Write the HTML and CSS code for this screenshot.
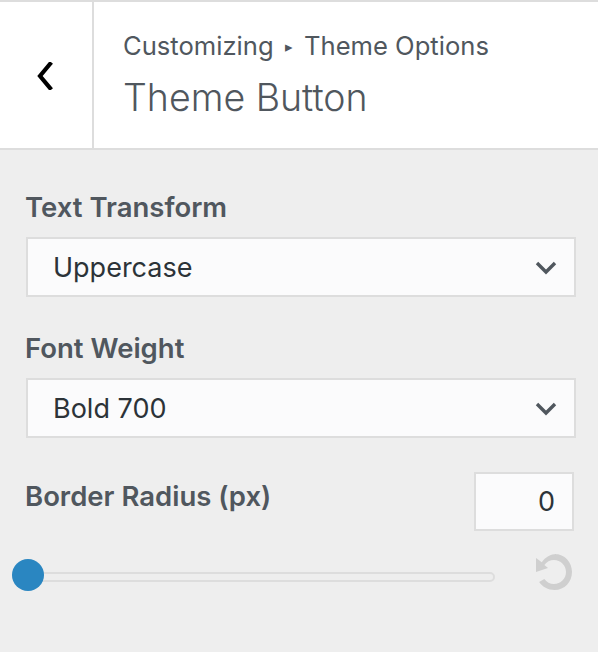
FILE: index.html
```html
<!DOCTYPE html>
<html>
<head>
<meta charset="utf-8">
<link rel="stylesheet" href="styles.css">
</head>
<body>
<header class="header">
  <div class="back">
    <svg width="18" height="28" viewBox="0 0 18 28"><path d="M14 2 L4 14 L14 26" fill="none" stroke="#000" stroke-width="4.2" stroke-linecap="square" stroke-linejoin="miter"/></svg>
  </div>
  <div class="titles">
    <div class="crumb">Customizing <span class="tri">▸</span> Theme Options</div>
    <div class="title">Theme Button</div>
  </div>
</header>
<main class="content">
  <div class="control">
    <div class="label">Text Transform</div>
    <div class="select">
      <span>Uppercase</span>
      <svg class="chev" width="22" height="14" viewBox="0 0 22 14"><path d="M2 2 L11 11 L20 2" fill="none" stroke="#50575e" stroke-width="3.4"/></svg>
    </div>
  </div>
  <div class="control">
    <div class="label">Font Weight</div>
    <div class="select">
      <span>Bold 700</span>
      <svg class="chev" width="22" height="14" viewBox="0 0 22 14"><path d="M2 2 L11 11 L20 2" fill="none" stroke="#50575e" stroke-width="3.4"/></svg>
    </div>
  </div>
  <div class="control range-control">
    <div class="range-head">
      <div class="label">Border Radius (px)</div>
      <div class="number">0</div>
    </div>
    <div class="range-row">
      <div class="track"><div class="thumb"></div></div>
      <svg class="reset" width="40" height="40" viewBox="0 0 20 20">
        <path fill="#cfcfcf" d="M10.25 1.02c5.1 0 8.75 4.04 8.75 9s-3.65 9-8.75 9c-3.2 0-6.02-1.59-7.68-3.99l2.59-1.52c1.1 1.5 2.86 2.51 4.84 2.51 3.3 0 6-2.690 6-6s-2.7-6-6-6c-1.97 0-3.72 1-4.82 2.49L7 8.02l-6 2v-7l2.890 2.07c1.670-2.370 4.5-4.070 7.36-4.070z"/>
      </svg>
    </div>
  </div>
</main>
</body>
</html>
```
FILE: styles.css
```css
html, body {
  margin: 0;
  padding: 0;
}
body {
  background: #eeeeee;
  font-family: Inter, "Noto Sans", sans-serif;
  width: 598px;
  height: 652px;
  overflow: hidden;
}
.header {
  display: flex;
  background: #fff;
  border-top: 2px solid #dddddd;
  border-bottom: 2px solid #dddddd;
  height: 146px;
}
.back {
  width: 94px;
  border-right: 2px solid #dddddd;
  display: flex;
  align-items: center;
  justify-content: center;
  padding-right: 2px;
  box-sizing: border-box;
}
.back svg {
  display: block;
  margin-top: 1px;
}
.titles {
  padding-left: 29px;
  padding-top: 28px;
  color: #50575e;
}
.crumb {
  font-size: 25.6px;
  line-height: 32px;
}
.tri {
  font-size: 15px;
  position: relative;
  top: -3px;
  margin: 0 4px;
}
.title {
  font-size: 37.5px;
  font-weight: 300;
  line-height: 46px;
  margin-top: 9px;
}
.content {
  padding: 40px 22px 0 26px;
}
.control {
  margin-bottom: 34px;
}
.label {
  font-size: 27.5px;
  font-weight: 600;
  color: #50575e;
  line-height: 34px;
  margin-left: -1px;
  margin-bottom: 13px;
}
.select {
  height: 56px;
  border: 2px solid #dddddd;
  background: #fbfbfc;
  display: flex;
  align-items: center;
  justify-content: space-between;
  padding: 0 17px 0 25px;
  font-size: 27px;
  color: #2c3338;
}
.chev {
  display: block;
  margin-top: 1px;
}
.range-head {
  display: flex;
  justify-content: space-between;
  align-items: flex-start;
}
.range-head .label {
  margin-top: 7px;
}
.number {
  width: 79px;
  height: 55px;
  border: 2px solid #dddddd;
  background: #fbfbfc;
  font-size: 27px;
  color: #2c3338;
  text-align: right;
  line-height: 55px;
  padding-right: 17px;
  margin-right: 2px;
}
.range-row {
  display: flex;
  align-items: center;
  justify-content: space-between;
  margin-top: 30px;
  margin-left: -14px;
}
.track {
  position: relative;
  width: 479px;
  height: 6px;
  border: 2px solid #dddddd;
  border-radius: 6px;
  background: #eeeeee;
}
.thumb {
  position: absolute;
  left: -2px;
  top: -15px;
  width: 32px;
  height: 32px;
  border-radius: 50%;
  background: #2a86c1;
}
.reset {
  display: block;
  margin-right: 2px;
  margin-top: -9px;
}
```
